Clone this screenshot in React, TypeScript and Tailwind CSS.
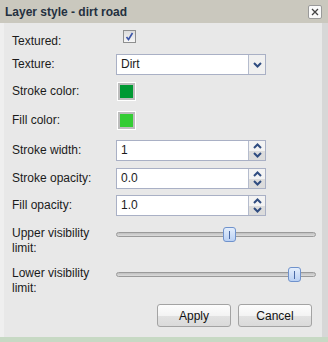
import React from "react";

const font = { fontFamily: '"Liberation Sans", Arial, sans-serif' };

function Label({ children }: { children: React.ReactNode }) {
  return <div className="w-[104px] shrink-0 text-[12px] leading-[15px] text-[#1b1b1b]">{children}</div>;
}

function Spinner() {
  return (
    <div className="flex w-[17px] flex-col border-l border-[#b5bccd]">
      <div className="flex h-1/2 items-center justify-center bg-[#f3f3f3]">
        <svg width="9" height="6" viewBox="0 0 9 6">
          <path d="M1 5 L4.5 1.5 L8 5" stroke="#2f4c80" strokeWidth="2" fill="none" />
        </svg>
      </div>
      <div className="flex h-1/2 items-center justify-center bg-[#dcdcdc]">
        <svg width="9" height="6" viewBox="0 0 9 6">
          <path d="M1 1 L4.5 4.5 L8 1" stroke="#2f4c80" strokeWidth="2" fill="none" />
        </svg>
      </div>
    </div>
  );
}

function NumberField({ value }: { value: string }) {
  return (
    <div className="flex h-[21px] w-[150px] border border-[#a9b0c5] bg-white">
      <div className="flex-1 pl-[4px] text-[12px] leading-[19px] text-[#1b1b1b]">{value}</div>
      <Spinner />
    </div>
  );
}

function Swatch({ color }: { color: string }) {
  return (
    <div className="ml-[1px] flex h-[19px] w-[19px] items-center justify-center border border-white bg-[#bdbdbd]">
      <div className="h-[13px] w-[13px]" style={{ background: color }} />
    </div>
  );
}

function Slider({ pos }: { pos: number }) {
  return (
    <div className="relative mt-[6px] h-[5px] w-[200px] rounded-full border border-[#9a9a9a] bg-gradient-to-b from-[#bfbfbf] to-[#dcdcdc]">
      <div
        className="absolute top-[-6px] flex h-[15px] w-[13px] items-center justify-center rounded-[3px] border border-[#6f92cc] bg-gradient-to-b from-[#e4eefc] to-[#b9d0f3]"
        style={{ left: pos }}
      >
        <div className="h-[8px] w-[1px] bg-[#4a6aa6]" />
      </div>
    </div>
  );
}

function Button({ children }: { children: React.ReactNode }) {
  return (
    <div className="flex h-[23px] w-[74px] items-center justify-center rounded-[3px] border border-[#a3a3a3] bg-[linear-gradient(#fdfdfd_0%,#f3f3f3_50%,#e2e2e2_51%,#dadada_100%)] text-[12px] text-[#111]">
      {children}
    </div>
  );
}

export default function App() {
  return (
    <div className="h-[342px] w-[328px] bg-[#c7d9c4]" style={font}>
      <div className="flex h-[337px] flex-col border-l-[4px] border-r-[6px] border-l-[#efefef] border-r-[#d7d7d7] bg-[#e8e8e8]">
        <div className="-ml-[4px] -mr-[6px] flex h-[23px] items-center justify-between bg-[#cac8be] pl-[5px] pr-[6px]">
          <span className="text-[12px] font-bold text-[#243040]">Layer style - dirt road</span>
          <div className="flex h-[14px] w-[14px] items-center justify-center rounded-[2px] border border-[#9a9a9a] bg-[#fafafa]">
            <svg width="8" height="8" viewBox="0 0 8 8">
              <path d="M1 1 L7 7 M7 1 L1 7" stroke="#444" strokeWidth="1.3" />
            </svg>
          </div>
        </div>

        <div className="flex flex-col pl-[8px]">
          <div className="mt-[6px] flex h-[18px] items-start">
            <div className="mt-[5px]"><Label>Textured:</Label></div>
            <div className="ml-[7px] mt-[1px] flex h-[13px] w-[13px] items-center justify-center border border-[#8e8f8f] bg-gradient-to-b from-[#dcdcdc] to-[#f6f6f6]">
              <svg width="9" height="9" viewBox="0 0 9 9">
                <path d="M1.5 5 L3.5 7.5 L7.5 1" stroke="#3b55a8" strokeWidth="1.6" fill="none" />
              </svg>
            </div>
          </div>

          <div className="mt-[7px] flex h-[21px] items-center">
            <Label>Texture:</Label>
            <div className="flex h-[21px] w-[150px] border border-[#a9b0c5] bg-white">
              <div className="flex-1 pl-[4px] text-[12px] leading-[19px] text-[#1b1b1b]">Dirt</div>
              <div className="flex w-[17px] items-center justify-center border-l border-[#b5bccd] bg-[#f0f0f0]">
                <svg width="9" height="6" viewBox="0 0 9 6">
                  <path d="M1 1 L4.5 4.5 L8 1" stroke="#2f4c80" strokeWidth="2" fill="none" />
                </svg>
              </div>
            </div>
          </div>

          <div className="mt-[7px] flex h-[19px] items-center">
            <Label>Stroke color:</Label>
            <Swatch color="#009933" />
          </div>

          <div className="mt-[10px] flex h-[19px] items-center">
            <Label>Fill color:</Label>
            <Swatch color="#33cc33" />
          </div>

          <div className="mt-[10px] flex h-[21px] items-center">
            <Label>Stroke width:</Label>
            <NumberField value="1" />
          </div>

          <div className="mt-[7px] flex h-[21px] items-center">
            <Label>Stroke opacity:</Label>
            <NumberField value="0.0" />
          </div>

          <div className="mt-[6px] flex h-[21px] items-center">
            <Label>Fill opacity:</Label>
            <NumberField value="1.0" />
          </div>

          <div className="mt-[10px] flex h-[30px] items-start">
            <Label>
              Upper visibility
              <br />
              limit:
            </Label>
            <Slider pos={106} />
          </div>

          <div className="mt-[10px] flex h-[30px] items-start">
            <Label>
              Lower visibility
              <br />
              limit:
            </Label>
            <Slider pos={171} />
          </div>

          <div className="mt-[8px] flex justify-end gap-[7px] pr-[10px]">
            <Button>Apply</Button>
            <Button>Cancel</Button>
          </div>
        </div>
      </div>
    </div>
  );
}
